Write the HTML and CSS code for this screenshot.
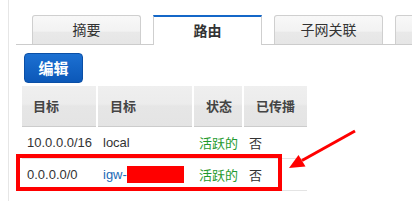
FILE: index.html
```html
<!DOCTYPE html>
<html>
<head>
<meta charset="utf-8">
<link rel="stylesheet" href="styles.css">
</head>
<body>
<div class="page">
  <div class="tabs">
    <div class="tab">摘要</div>
    <div class="tab active">路由</div>
    <div class="tab">子网关联</div>
    <div class="tab"></div>
  </div>
  <button class="btn">编辑</button>
  <table class="grid">
    <thead>
      <tr><th class="c1">目标</th><th class="c2">目标</th><th class="c3">状态</th><th class="c4">已传播</th></tr>
    </thead>
    <tbody>
      <tr><td>10.0.0.0/16</td><td>local</td><td class="ok">活跃的</td><td>否</td></tr>
      <tr><td>0.0.0.0/0</td><td><span class="link">igw-</span><span class="redact"></span></td><td class="ok">活跃的</td><td>否</td></tr>
    </tbody>
  </table>
  <div class="highlight"></div>
  <svg class="arrow" width="412" height="201" viewBox="0 0 412 201">
    <line x1="355" y1="131" x2="302" y2="160.5" stroke="#ff0000" stroke-width="3"/>
    <polygon points="289,168 298.5,155 305.5,166.5" fill="#ff0000"/>
  </svg>
</div>
</body>
</html>
```

FILE: styles.css
```css
html, body {
  margin: 0;
  padding: 0;
  background: #fff;
}
body {
  width: 412px;
  height: 201px;
  overflow: hidden;
  font-family: "Liberation Sans", "Noto Sans CJK SC", sans-serif;
  color: #333;
}
.page {
  position: relative;
  margin-left: 8px;
  border-left: 1px solid #e6e6e6;
  padding-left: 7px;
  height: 201px;
  box-sizing: border-box;
}
.tabs {
  display: flex;
  gap: 12px;
  padding: 15px 0 0 16px;
  border-bottom: 1px solid #cccccc;
  height: 29px;
}
.tab {
  flex: 0 0 109px;
  box-sizing: border-box;
  height: 29px;
  border: 1px solid #cfcfcf;
  border-bottom: none;
  border-radius: 3px 3px 0 0;
  background: linear-gradient(#f8f8f8, #f2f2f2 55%, #e9e9e9 56%, #e6e6e6);
  font-size: 14px;
  line-height: 29px;
  text-align: center;
  color: #333;
}
.tab.active {
  background: #fff;
  border-top: 2px solid #1467c8;
  border-radius: 0;
  height: 30px;
  margin-bottom: -1px;
  font-weight: bold;
  line-height: 28px;
  color: #333;
}
.btn {
  display: block;
  margin: 8px 0 0 8px;
  width: 59px;
  height: 30px;
  padding: 0;
  border: 1px solid #0a4fa6;
  border-radius: 4px;
  background: linear-gradient(#1c70d2, #0c58b8);
  color: #fff;
  font-family: "Noto Sans CJK SC", sans-serif;
  font-size: 15px;
  font-weight: bold;
  line-height: 28px;
}
.grid {
  margin: 3px 0 0 6px;
  border-collapse: collapse;
  table-layout: fixed;
  width: 285px;
  font-size: 13px;
}
.grid th {
  height: 40px;
  box-sizing: border-box;
  padding: 0 0 0 12px;
  text-align: left;
  font-weight: bold;
  color: #444;
  background: linear-gradient(#efefef, #ececec 45%, #e6e6e6 50%, #e4e4e4);
  border-left: 2px solid #fff;
  border-bottom: 1px solid #cccccc;
}
.grid th.c1 { width: 75px; border-left: none; padding-left: 11px; }
.grid th.c2 { width: 96px; }
.grid th.c3 { width: 50px; }
.grid th.c4 { width: 64px; }
.grid td {
  height: 31px;
  padding: 0 0 0 6px;
  border-bottom: 1px solid #e4e4e4;
  white-space: nowrap;
  color: #333;
}
.grid td:first-child { padding-left: 5px; }
.grid td.ok { color: #1f9a2e; }
.link { color: #1b6ab7; }
.redact {
  display: inline-block;
  width: 57px;
  height: 17px;
  background: #ff0000;
  vertical-align: -4px;
}
.highlight {
  position: absolute;
  left: 7px;
  top: 154px;
  width: 266px;
  height: 37px;
  box-sizing: border-box;
  border: 4px solid #ff0000;
}
.arrow {
  position: absolute;
  left: -9px;
  top: 0;
  pointer-events: none;
}
```
